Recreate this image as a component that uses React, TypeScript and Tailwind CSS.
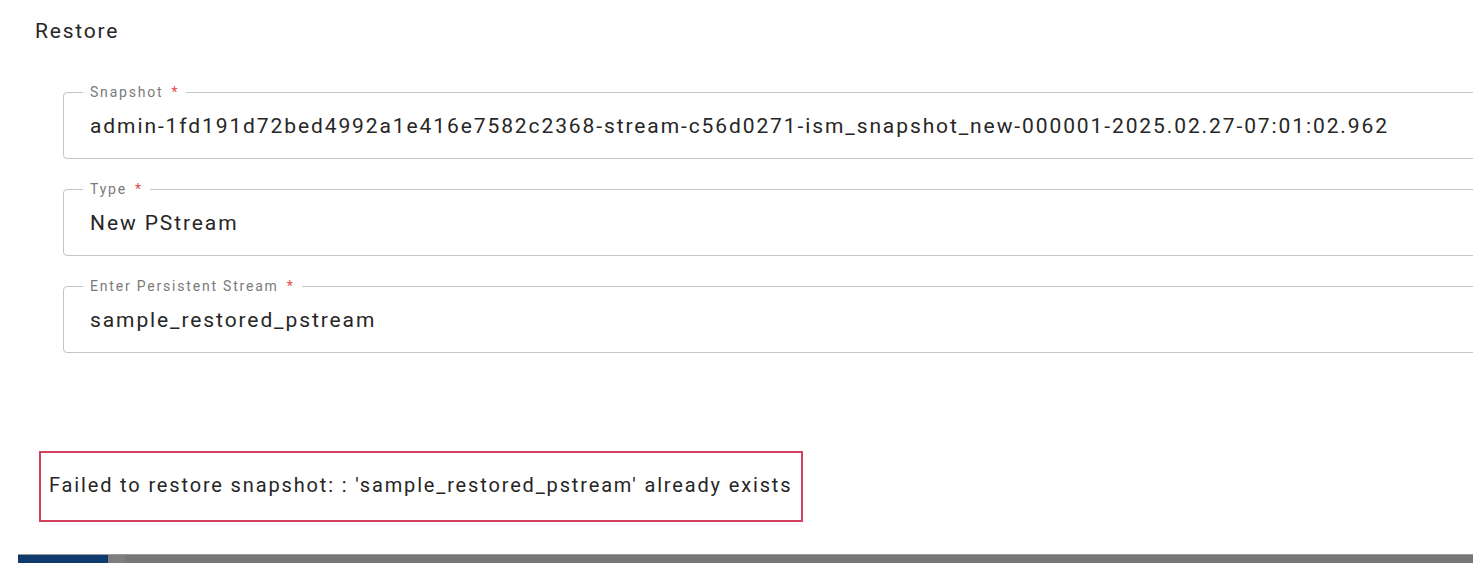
import React from 'react';

interface FieldProps {
  label: string;
  value: string;
}

function OutlinedField({ label, value }: FieldProps) {
  return (
    <div className="relative h-[67px] w-[1440px] rounded-[4px] border border-[#c4c4c4] flex items-center">
      <span className="absolute -top-[9px] left-[19px] bg-white px-[7px] text-[14px] leading-[16px] tracking-[1.8px] text-[#7a7a7a]">
        {label}
        <span className="ml-[8px] text-[#e34b4b]">*</span>
      </span>
      <span className="pl-[26px] pt-[2px] text-[21px] tracking-[1.9px] text-[#262626]">{value}</span>
    </div>
  );
}

export default function App() {
  return (
    <div
      className="relative w-[1483px] h-[569px] overflow-hidden bg-white"
      style={{ fontFamily: 'Roboto, "Liberation Sans", sans-serif' }}
    >
      <div className="w-[1473px] h-full overflow-hidden flex flex-col">
        <h2 className="pl-[35px] pt-[18px] text-[21px] leading-[26px] tracking-[1.8px] text-[#262626]">Restore</h2>

        <div className="pl-[63px] mt-[48px] flex flex-col gap-[30px]">
          <OutlinedField
            label="Snapshot"
            value="admin-1fd191d72bed4992a1e416e7582c2368-stream-c56d0271-ism_snapshot_new-000001-2025.02.27-07:01:02.962"
          />
          <OutlinedField label="Type" value="New PStream" />
          <OutlinedField label="Enter Persistent Stream" value="sample_restored_pstream" />
        </div>

        <div className="ml-[39px] mt-[98px] w-[764px] h-[71px] border-[2.5px] border-[#d4415f] flex items-center pl-[8px] pb-[4px]">
          <span className="text-[20px] tracking-[1.85px] text-[#262626]">
            Failed to restore snapshot: : 'sample_restored_pstream' already exists
          </span>
        </div>

        {/* bottom toolbar strip */}
        <div className="ml-[18px] mt-[32px] h-[9px] flex border-t border-[#9a9a9a]">
          <div className="w-[90px] bg-[#0e3a6e]"></div>
          <div className="w-[17px] bg-[#7e7e7e]"></div>
          <div className="flex-1 bg-[#767676]"></div>
        </div>
      </div>
    </div>
  );
}
